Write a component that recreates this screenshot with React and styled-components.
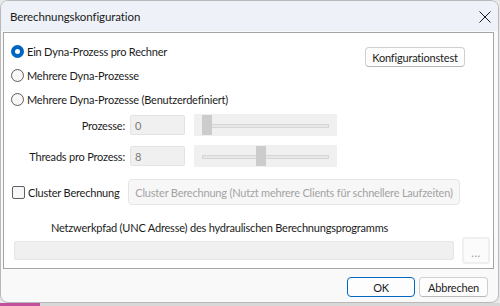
import React from 'react';
import styled, { createGlobalStyle } from 'styled-components';

const GlobalStyle = createGlobalStyle`
  html, body {
    margin: 0;
    padding: 0;
    width: 500px;
    height: 306px;
    overflow: hidden;
    background: #e9e9ea;
  }
  body {
    font-family: Lato, "Noto Sans", sans-serif;
    font-size: 11px;
    letter-spacing: -0.2px;
    color: #1b1b1b;
  }
`;

function Radio({ checked, children }) {
  return (
    <RadioRow>
      <RadioDot checked={checked} />
      <span>{children}</span>
    </RadioRow>
  );
}

function Slider({ pos }) {
  return (
    <SliderBox>
      <Track />
      <Thumb style={{ left: pos }} />
    </SliderBox>
  );
}

function App() {
  return (
    <>
      <GlobalStyle />
      <Window>
        <TitleBar>
          <Title>Berechnungskonfiguration</Title>
          <Close viewBox="0 0 12 12">
            <path d="M0.5 0.5 L11.5 11.5 M11.5 0.5 L0.5 11.5" stroke="#1a1a1a" strokeWidth="1" fill="none" />
          </Close>
        </TitleBar>

        <Panel>
          <TopRow>
            <RadioGroup>
              <Radio checked>Ein Dyna-Prozess pro Rechner</Radio>
              <Radio>Mehrere Dyna-Prozesse</Radio>
              <Radio>Mehrere Dyna-Prozesse (Benutzerdefiniert)</Radio>
            </RadioGroup>
            <Button top="8px" width="100px">Konfigurationstest</Button>
          </TopRow>

          <FieldRow>
            <FieldLabel>Prozesse:</FieldLabel>
            <ReadOnlyInput>0</ReadOnlyInput>
            <Slider pos="8px" />
          </FieldRow>

          <FieldRow gap="9px">
            <FieldLabel>Threads pro Prozess:</FieldLabel>
            <ReadOnlyInput>8</ReadOnlyInput>
            <Slider pos="62px" />
          </FieldRow>

          <ClusterRow>
            <CheckLabel>
              <CheckBox />
              <span>Cluster Berechnung</span>
            </CheckLabel>
            <DisabledButton>Cluster Berechnung (Nutzt mehrere Clients für schnellere Laufzeiten)</DisabledButton>
          </ClusterRow>

          <PathLabel>Netzwerkpfad (UNC Adresse) des hydraulischen Berechnungsprogramms</PathLabel>

          <PathRow>
            <PathInput />
            <BrowseButton>...</BrowseButton>
          </PathRow>
        </Panel>

        <Footer>
          <Button primary width="68px">OK</Button>
          <Button width="69px">Abbrechen</Button>
        </Footer>
      </Window>
      <Desktop />
    </>
  );
}

const Window = styled.div`
  box-sizing: border-box;
  width: 499px;
  height: 303px;
  border: 1px solid #b9b9bc;
  border-radius: 8px;
  background: #f9f9f9;
  overflow: hidden;
  display: flex;
  flex-direction: column;
`;

const TitleBar = styled.div`
  height: 30px;
  flex: none;
  background: #eef2f8;
  display: flex;
  align-items: center;
  justify-content: space-between;
  padding: 0 7px 0 9px;
`;

const Title = styled.span`
  font-size: 11.5px;
  letter-spacing: -0.1px;
  color: #1a1a1a;
  margin-top: 1px;
`;

const Close = styled.svg`
  width: 12px;
  height: 12px;
  margin-top: 1px;
`;

const Panel = styled.div`
  flex: none;
  box-sizing: border-box;
  height: 237px;
  margin: 1px 4px 0 2px;
  border: 1px solid #a5a5a5;
  background: #ffffff;
  padding: 6px 2px 0 7px;
  display: flex;
  flex-direction: column;
`;

const TopRow = styled.div`
  display: flex;
  justify-content: space-between;
  align-items: flex-start;
  padding-right: 26px;
`;

const RadioGroup = styled.div`
  display: flex;
  flex-direction: column;
`;

const RadioRow = styled.label`
  height: 24px;
  display: flex;
  align-items: center;
  gap: 3px;
`;

const RadioDot = styled.span`
  box-sizing: border-box;
  width: 13px;
  height: 13px;
  border-radius: 50%;
  border: 1px solid #5c5c5c;
  background: #f7f7f7;
  ${({ checked }) => checked && `
    border: 4px solid #0064c2;
    background: #ffffff;
  `}
`;

const Button = styled.div`
  box-sizing: border-box;
  height: 20px;
  width: ${({ width }) => width || 'auto'};
  padding: 0 6px;
  margin-top: ${({ top }) => top || '0'};
  border: 1px solid ${({ primary }) => (primary ? '#0067c0' : '#d0d0d0')};
  border-bottom-color: ${({ primary }) => (primary ? '#0067c0' : '#b8b8b8')};
  border-radius: 4px;
  background: #fdfdfd;
  display: flex;
  align-items: center;
  justify-content: center;
  white-space: nowrap;
`;

const FieldRow = styled.div`
  display: flex;
  align-items: center;
  height: 22px;
  margin-top: ${({ gap }) => gap || '3px'};
`;

const FieldLabel = styled.span`
  box-sizing: border-box;
  width: 119px;
  text-align: right;
  padding-right: 5px;
  white-space: nowrap;
`;

const ReadOnlyInput = styled.div`
  box-sizing: border-box;
  width: 55px;
  height: 20px;
  background: #f0f0f0;
  border: 1px solid #e3e3e3;
  border-radius: 2px;
  color: #7a7a7a;
  padding-left: 4px;
  display: flex;
  align-items: center;
`;

const SliderBox = styled.div`
  position: relative;
  width: 143px;
  height: 22px;
  margin-left: 9px;
  background: #f0f0f0;
`;

const Track = styled.div`
  position: absolute;
  left: 8px;
  right: 8px;
  top: 10px;
  height: 2px;
  border: 1px solid #d6d6d6;
  background: #e7e7e7;
`;

const Thumb = styled.div`
  position: absolute;
  top: 1px;
  width: 10px;
  height: 20px;
  background: #cccccc;
`;

const ClusterRow = styled.div`
  display: flex;
  align-items: center;
  margin-top: 12px;
  height: 26px;
`;

const CheckLabel = styled.label`
  width: 116px;
  display: flex;
  align-items: center;
  gap: 3px;
  margin-left: 1px;
  white-space: nowrap;
`;

const CheckBox = styled.span`
  box-sizing: border-box;
  width: 13px;
  height: 13px;
  border: 1px solid #5f5f5f;
  border-radius: 2px;
  background: #f7f7f7;
`;

const DisabledButton = styled.div`
  box-sizing: border-box;
  width: 332px;
  height: 26px;
  border: 1px solid #e5e5e5;
  border-radius: 4px;
  background: #f7f7f7;
  color: #a3a3a3;
  display: flex;
  align-items: center;
  justify-content: center;
  white-space: nowrap;
`;

const PathLabel = styled.div`
  margin: 14px 0 0 40px;
  height: 16px;
  display: flex;
  align-items: center;
`;

const PathRow = styled.div`
  display: flex;
  align-items: center;
  gap: 8px;
  margin-top: 2px;
  height: 27px;
`;

const PathInput = styled.div`
  box-sizing: border-box;
  width: 440px;
  height: 19px;
  margin-left: 3px;
  background: #f0f0f0;
  border: 1px solid #e6e6e6;
  border-radius: 2px;
`;

const BrowseButton = styled.div`
  box-sizing: border-box;
  width: 28px;
  height: 27px;
  border: 2px solid #efefef;
  border-radius: 3px;
  background: #fbfbfb;
  color: #9a9a9a;
  display: flex;
  align-items: center;
  justify-content: center;
  padding-top: 3px;
  letter-spacing: 0.5px;
`;

const Footer = styled.div`
  flex: 1;
  display: flex;
  justify-content: flex-end;
  align-items: flex-start;
  gap: 4px;
  padding: 8px 10px 0 0;
`;

const Desktop = styled.div`
  height: 3px;
  background: linear-gradient(90deg, #c24f9c 0 40px, #d8d8d8 40px 100%);
`;

export default App;
